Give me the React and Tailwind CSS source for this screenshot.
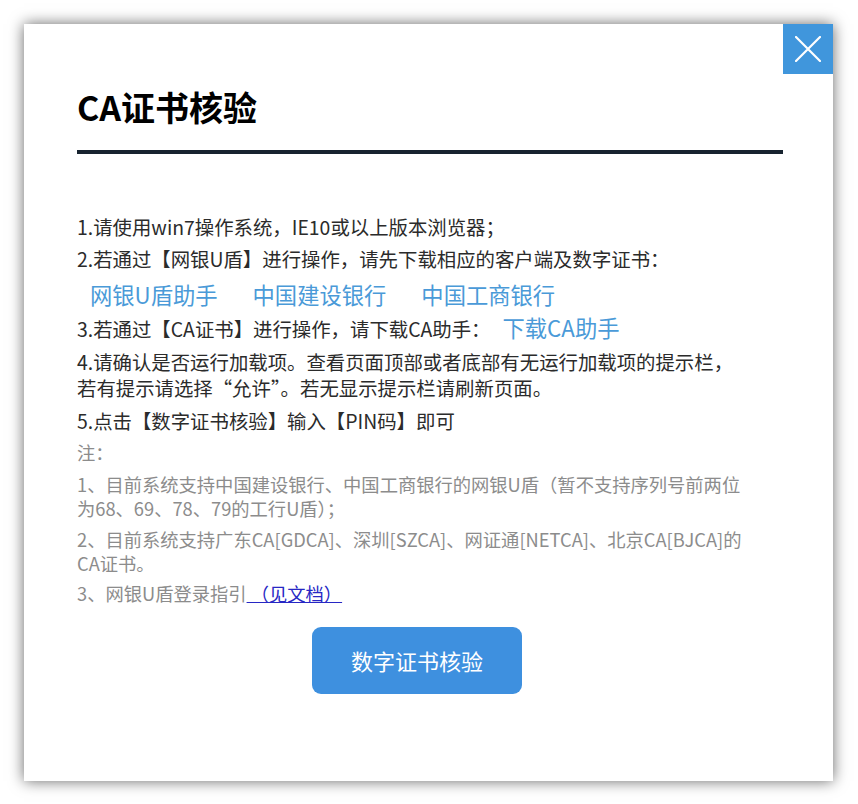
import React from 'react';

function CloseIcon() {
  return (
    <svg width="26" height="26" viewBox="0 0 26 26" fill="none">
      <path d="M1 1L25 25M25 1L1 25" stroke="white" strokeWidth="2.2" strokeLinecap="round" />
    </svg>
  );
}

export default function App() {
  return (
    <div className="w-[858px] h-[804px] bg-white pt-[24px] pl-[24px] font-['Noto_Sans_CJK_SC',sans-serif]">
      <div className="relative w-[809px] h-[757px] bg-white shadow-[0_0_14px_rgba(0,0,0,0.6)] pl-[53px] pr-[50px] pt-[63px]">
        <button className="absolute top-0 right-0 w-[50px] h-[50px] bg-[#4096dc] flex items-center justify-center">
          <CloseIcon />
        </button>

        <h1 className="text-[34px] leading-[40px] font-bold text-black">CA证书核验</h1>
        <div className="mt-[23px] h-[4px] bg-[#17232f]" />

        <div className="mt-[60px] text-[19.4px] leading-[26px] text-[#2b2b2b]">
          <p>1.请使用win7操作系统，IE10或以上版本浏览器；</p>
          <p className="mt-[6px]">2.若通过【网银U盾】进行操作，请先下载相应的客户端及数字证书：</p>
          <div className="mt-[5px] flex gap-[35px] pl-[13px] text-[22.3px] leading-[34px] text-[#4a9ad8]">
            <a href="#">网银U盾助手</a>
            <a href="#">中国建设银行</a>
            <a href="#">中国工商银行</a>
          </div>
          <p className="mt-[3px]">
            3.若通过【CA证书】进行操作，请下载CA助手：
            <a href="#" className="ml-[12px] text-[22.3px] text-[#4a9ad8]">下载CA助手</a>
          </p>
          <p className="mt-[7px]">
            4.请确认是否运行加载项。查看页面顶部或者底部有无运行加载项的提示栏，
            <br />
            若有提示请选择“允许”。若无显示提示栏请刷新页面。
          </p>
          <p className="mt-[7px]">5.点击【数字证书核验】输入【PIN码】即可</p>
        </div>

        <div className="mt-[6px] text-[18.3px] leading-[24px] text-[#8c8c8c]">
          <p>注：</p>
          <p className="mt-[8px]">
            1、目前系统支持中国建设银行、中国工商银行的网银U盾（暂不支持序列号前两位
            <br />
            为68、69、78、79的工行U盾）；
          </p>
          <p className="mt-[7px]">
            2、目前系统支持广东CA[GDCA]、深圳[SZCA]、网证通[NETCA]、北京CA[BJCA]的
            <br />
            CA证书。
          </p>
          <p className="mt-[6px]">
            3、网银U盾登录指引
            <a href="#" className="underline text-[#2727c4]">&nbsp;（见文档）</a>
          </p>
        </div>

        <button className="mt-[22px] ml-[235px] w-[210px] h-[67px] rounded-[9px] bg-[#3e90df] text-white text-[22px]">
          数字证书核验
        </button>
      </div>
    </div>
  );
}
